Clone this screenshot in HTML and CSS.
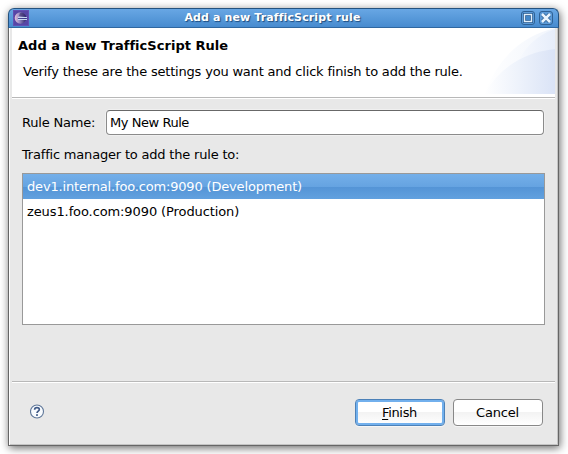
FILE: index.html
```html
<!DOCTYPE html>
<html lang="en">
<head>
<meta charset="utf-8">
<title>Add a new TrafficScript rule</title>
<link rel="stylesheet" href="styles.css">
</head>
<body>
<div class="window">
  <div class="titlebar">
    <svg class="logo" width="16" height="16" viewBox="0 0 16 16">
      <defs>
        <linearGradient id="orb" x1="0" x2="1"><stop offset="0" stop-color="#e8bfd8"/><stop offset=".35" stop-color="#a294ca"/><stop offset="1" stop-color="#292267"/></linearGradient>
      </defs>
      <rect width="16" height="16" fill="#5746a5"/>
      <rect x=".5" y=".5" width="15" height="15" fill="none" stroke="#6250b3"/>
      <circle cx="7.500" cy="8" r="5.800" fill="url(#orb)"/>
      <path d="M7 3Q10 2 12 5L12.500 6H6Z" fill="#2d2363" opacity=".5"/>
      <path d="M5 7.500h9M5 9.500h9" stroke="#c6d6f2"/>
      <path d="M5 8.500h8" stroke="#39388b" opacity=".8"/>
    </svg>
    <span class="title">Add a new TrafficScript rule</span>
    <div class="controls">
      <svg width="14" height="14" viewBox="0 0 14 14">
        <rect x=".5" y=".5" width="13" height="13" rx="2.500" fill="#5b9ad8" stroke="#2f6195"/>
        <rect x="3.500" y="3.500" width="7" height="7" fill="#4387c9" stroke="#2a5d93" stroke-width="3"/>
        <rect x="3.500" y="3.500" width="7" height="7" fill="none" stroke="#e3f0fb" stroke-width="1.400"/>
      </svg>
      <svg width="14" height="14" viewBox="0 0 14 14">
        <rect x=".5" y=".5" width="13" height="13" rx="2.500" fill="#5b9ad8" stroke="#2f6195"/>
        <path d="M3.500 3.500l7 7M10.500 3.500l-7 7" stroke="#2a5d93" stroke-width="4"/>
        <path d="M3 3l8 8M11 3l-8 8" stroke="#e9f4fd" stroke-width="2.500"/>
      </svg>
    </div>
  </div>
  <div class="body">
    <header class="banner">
      <div class="banner-text">
        <h1>Add a New TrafficScript Rule</h1>
        <p>Verify these are the settings you want and click finish to add the rule.</p>
      </div>
      <svg class="swoosh" width="75" height="66" viewBox="0 0 75 66">
        <defs>
          <linearGradient id="sw1" x1="0" x2="1"><stop offset="0" stop-color="#fff"/><stop offset="1" stop-color="#f1f5fc"/></linearGradient>
          <linearGradient id="sw2" x1="0" x2="1"><stop offset="0" stop-color="#f8fafe"/><stop offset="1" stop-color="#e6edfa"/></linearGradient>
          <linearGradient id="sw3" x1="0" x2="1"><stop offset="0" stop-color="#fff"/><stop offset=".5" stop-color="#edf2fb"/><stop offset="1" stop-color="#dae3f6"/></linearGradient>
        </defs>
        <path d="M4 66Q25 12 75 0V66Z" fill="url(#sw1)"/>
        <path d="M36 38Q48 10 75 1V40Z" fill="url(#sw2)"/>
        <path d="M4 66Q28 26 75 21V66Z" fill="url(#sw3)"/>
      </svg>
    </header>
    <main class="form">
      <div class="field">
        <label for="rule">Rule Name:</label>
        <input id="rule" type="text" value="My New Rule">
      </div>
      <div class="list-label">Traffic manager to add the rule to:</div>
      <ul class="list">
        <li class="selected">dev1.internal.foo.com:9090 (Development)</li>
        <li class="production">zeus1.foo.com:9090 (Production)</li>
      </ul>
    </main>
    <footer class="footer">
      <svg class="help" width="15" height="15" viewBox="0 0 15 15">
        <circle cx="7" cy="7.500" r="6.500" fill="#f8fbfe" stroke="#5f7799" stroke-width="1.100"/>
        <path d="M4.600 5.700C4.600 2.800 9.400 2.900 9.300 5.500C9.200 7.200 7 7 7 9.100" fill="none" stroke="#3f5986" stroke-width="1.700"/>
        <rect x="6.100" y="10.200" width="1.800" height="1.700" fill="#3f5986"/>
      </svg>
      <button class="btn primary"><span class="key">F</span>inish</button>
      <button class="btn">Cancel</button>
    </footer>
  </div>
</div>
</body>
</html>
```
FILE: styles.css
```css
* { box-sizing: border-box; }
body {
  margin: 0;
  padding: 8px 9px 8px 8px;
  height: 454px;
  overflow: hidden;
  background: #fff;
  font: 13px/16px "DejaVu Sans", sans-serif;
  letter-spacing: -.19px;
  color: #000;
}
.window {
  width: 551px;
  height: 438px;
  display: flex;
  flex-direction: column;
  border-radius: 6px 6px 0 0;
  box-shadow: 1px 2px 8px rgba(0, 0, 0, .6);
}
.titlebar {
  height: 20px;
  flex: none;
  display: flex;
  align-items: center;
  padding: 0 5px 0 4px;
  border: 1px solid #24527f;
  border-bottom-color: #2f67a0;
  border-radius: 6px 6px 0 0;
  background: linear-gradient(#68a7e4, #478bcf);
}
.title {
  flex: 1;
  padding-right: 5px;
  text-align: center;
  font-size: 11px;
  font-weight: bold;
  letter-spacing: .12px;
  color: #fff;
  text-shadow: 1px 1px 1px #1d4b7d;
}
.controls { display: flex; gap: 4px; }
.body {
  flex: 1;
  display: flex;
  flex-direction: column;
  padding: 0 2px;
  border: 1px solid #666;
  border-top: 0;
  background: #e8e8e8;
  box-shadow: inset 1px 0 #fff, inset -1px -1px #c4c4c4;
}
.banner {
  height: 71px;
  display: flex;
  justify-content: space-between;
  width: 543px;
  margin-left: 1px;
  background: #fff;
  border-bottom: 1px solid #fff;
  box-shadow: inset 0 -1px #b8b8b8;
}
.banner-text { padding: 10px 0 0 6px; white-space: nowrap; }
h1 { margin: 0; font-size: 13px; line-height: 16px; letter-spacing: .03px; }
p { margin: 10px 0 0 5px; }
.swoosh { flex: none; margin-left: -20px; }
.form {
  height: 282px;
  margin-left: 1px;
  width: 543px;
  padding: 11px 10px 0;
}
.field { display: flex; align-items: center; }
.field label { width: 84px; }
input {
  width: 438px;
  height: 25px;
  padding: 0 3px;
  border: 1px solid #8b8b8b;
  border-top-color: #686868;
  border-radius: 4px;
  font: inherit;
  letter-spacing: -.45px;
  box-shadow: 0 0 0 1px #f0f0f0;
}
.list-label { margin-top: 12px; }
.list {
  width: 523px;
  height: 152px;
  margin: 10px 0 0;
  padding: 0;
  list-style: none;
  border: 1px solid #999;
  background: #fff;
}
.list li { height: 25px; padding-left: 4px; line-height: 25px; }
.list .production { letter-spacing: -.1px; }
.list .selected {
  color: #fff;
  letter-spacing: -.17px;
  background: linear-gradient(#74afe9, #65a3e1 52%, #5494d6 52%, #62a1df);
}
.footer {
  flex: 1;
  display: flex;
  align-items: flex-start;
  width: 543px;
  margin-left: 1px;
  padding: 16px 12px 0 18px;
  border-top: 1px solid #b8b8b8;
  box-shadow: inset 0 1px #fff;
}
.help { margin: 6px auto 0 0; }
.btn {
  width: 90px;
  height: 27px;
  margin: 1px 0 0 8px;
  padding: 0 1px 0 0;
  border: 1px solid #888;
  border-radius: 4px;
  font: inherit;
  letter-spacing: -.2px;
  background: linear-gradient(#fff 50%, #f3f3f3 50%, #fff);
  box-shadow: 0 1px #f5f5f5;
}
.primary {
  letter-spacing: -.35px;
  border-color: #4c81b8;
  box-shadow: inset 0 0 0 2px #72b0ed, 0 1px #f5f5f5;
}
.key { text-decoration: underline; text-underline-offset: 2px; }
```
